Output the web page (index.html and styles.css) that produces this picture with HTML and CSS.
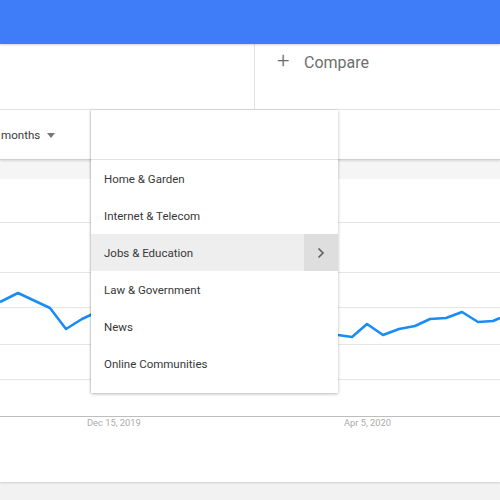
FILE: index.html
```html
<!DOCTYPE html>
<html>
<head>
<meta charset="utf-8">
<link rel="stylesheet" href="styles.css">
</head>
<body>
<header class="topbar"></header>
<section class="search-row">
  <div class="term"></div>
  <div class="compare"><span class="plus">+</span><span class="compare-label">Compare</span></div>
</section>
<section class="filter-row">
  <div class="filter">months <span class="caret"></span></div>
</section>
<section class="chart-card">
  <div class="chart-head"></div>
  <svg class="chart" width="500" height="240" viewBox="0 0 500 240">
    <g stroke="#e6e6e6" stroke-width="1">
      <line x1="0" y1="43.5" x2="500" y2="43.5"/>
      <line x1="0" y1="93.5" x2="500" y2="93.5"/>
      <line x1="0" y1="128.5" x2="500" y2="128.5"/>
      <line x1="0" y1="165.5" x2="500" y2="165.5"/>
      <line x1="0" y1="200.5" x2="500" y2="200.5"/>
    </g>
    <line x1="0" y1="237.5" x2="500" y2="237.5" stroke="#bdbdbd" stroke-width="1"/>
    <polyline fill="none" stroke="#1a8cf5" stroke-width="2.6" stroke-linejoin="round"
      points="0,123 18,114 50,129 66,150 82,140 97,133 114,128 130,135 146,131 162,138 178,134 194,141 210,137 226,144 242,140 258,147 274,143 290,150 306,153 322,151 338,156 352,158 367,145 383,156 399,150 415,147 430,140 446,139 462,133 478,143 493,142 500,139"/>
  </svg>
  <div class="axis">
    <span class="tick tick-1">Dec 15, 2019</span>
    <span class="tick tick-2">Apr 5, 2020</span>
  </div>
</section>

<div class="menu">
  <div class="menu-search"></div>
  <ul class="menu-list">
    <li class="item">Home &amp; Garden</li>
    <li class="item">Internet &amp; Telecom</li>
    <li class="item active">Jobs &amp; Education
      <span class="sub"><svg width="8" height="12" viewBox="0 0 8 12"><path d="M1.5 1.5 L6 6 L1.5 10.5" fill="none" stroke="#5f5f5f" stroke-width="1.6"/></svg></span>
    </li>
    <li class="item">Law &amp; Government</li>
    <li class="item">News</li>
    <li class="item">Online Communities</li>
  </ul>
</div>
</body>
</html>
```

FILE: styles.css
```css
html, body {
  margin: 0;
  padding: 0;
}
body {
  width: 500px;
  height: 500px;
  overflow: hidden;
  background: #f2f2f2;
  font-family: Roboto, "Liberation Sans", Arial, sans-serif;
  position: relative;
}
.topbar {
  height: 44px;
  background: #3f7cf8;
  box-shadow: 0 1px 2px rgba(0,0,0,0.18);
  position: relative;
  z-index: 2;
}
.search-row {
  height: 66px;
  background: #fff;
  display: flex;
  border-bottom: 1px solid #e4e4e4;
  box-sizing: border-box;
}
.term {
  width: 254px;
  border-right: 1px solid #e2e2e2;
}
.compare {
  display: flex;
  align-items: center;
  height: 36px;
  padding-left: 22px;
  color: #6e6e6e;
}
.plus {
  font-size: 22px;
  font-weight: 300;
  line-height: 1;
  margin-top: -3px;
  width: 27px;
}
.compare-label {
  font-size: 16px;
  margin-left: 0;
}
.filter-row {
  height: 50px;
  background: #fff;
  box-sizing: border-box;
  border-bottom: 1px solid #cfcfcf;
  box-shadow: 0 1px 2px rgba(0,0,0,0.12);
  display: flex;
  align-items: center;
  position: relative;
  z-index: 1;
}
.filter {
  font-size: 11.6px;
  color: #3a3a3a;
  padding-left: 1px;
  margin-top: 1px;
  display: flex;
  align-items: center;
}
.caret {
  display: inline-block;
  width: 0;
  height: 0;
  border-left: 4px solid transparent;
  border-right: 4px solid transparent;
  border-top: 5px solid #777;
  margin-left: 7px;
}
.chart-card {
  background: #fff;
  height: 322px;
  box-shadow: 0 1px 2px rgba(0,0,0,0.15);
}
.chart-head {
  height: 19px;
  background: #f5f5f5;
}
.chart {
  display: block;
}
.axis {
  position: relative;
  height: 20px;
  font-size: 9.3px;
  color: #ababab;
}
.tick {
  position: absolute;
  top: -2px;
}
.tick-1 { left: 87px; }
.tick-2 { left: 344px; }

.menu {
  position: absolute;
  left: 91px;
  top: 110px;
  width: 247px;
  background: #fff;
  box-shadow: 0 1px 3px rgba(0,0,0,0.28), -1px 0 1px rgba(0,0,0,0.08);
  z-index: 5;
  padding-bottom: 11px;
}
.menu-search {
  height: 49px;
  border-bottom: 1px solid #e2e2e2;
}
.menu-list {
  list-style: none;
  margin: 0;
  padding: 0;
}
.item {
  height: 37px;
  display: flex;
  align-items: center;
  padding-left: 13px;
  font-size: 11.5px;
  color: #383838;
  position: relative;
}
.item.active {
  background: #eeeeee;
}
.sub {
  position: absolute;
  right: 0;
  top: 0;
  width: 34px;
  height: 37px;
  background: #dedede;
  display: flex;
  align-items: center;
  justify-content: center;
}
```
